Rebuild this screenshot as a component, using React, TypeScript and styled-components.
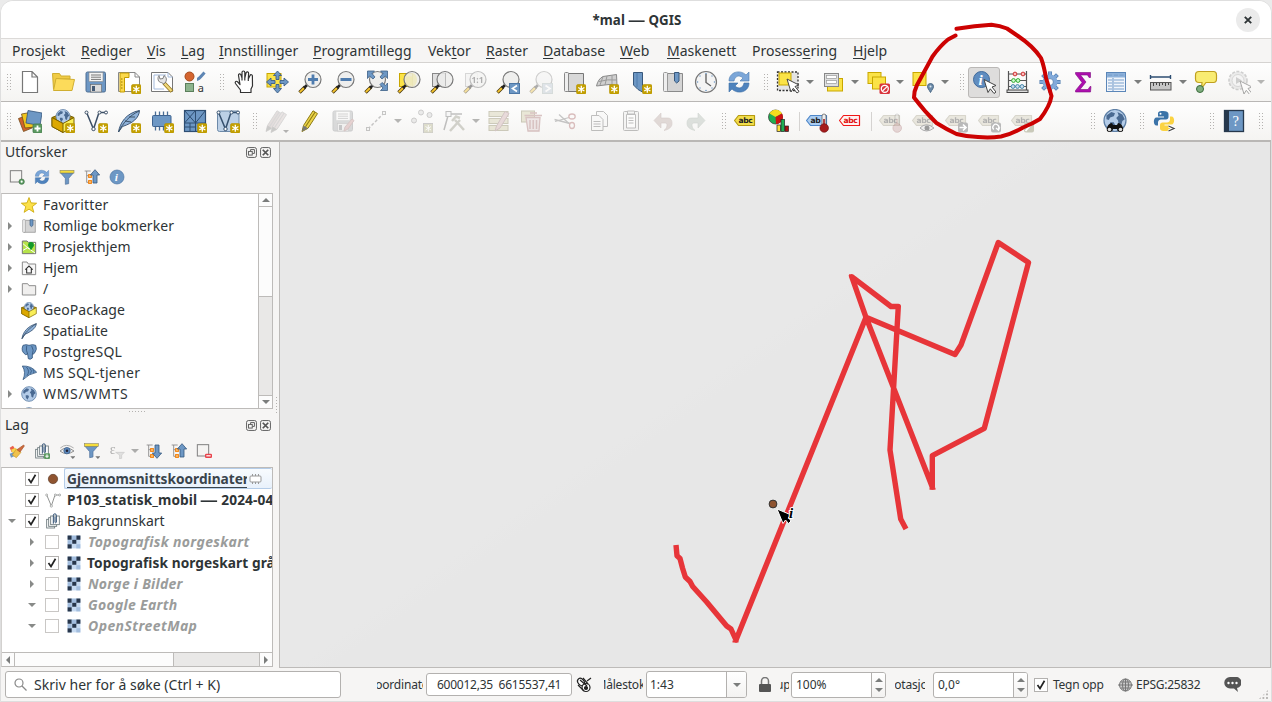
import React from 'react';
import styled, { createGlobalStyle, css } from 'styled-components';

const Global = createGlobalStyle`
  * { box-sizing: border-box; }
  body { margin: 0; background: #ebebeb; font-family: "Noto Sans", "Open Sans", sans-serif; font-size: 14px; color: #2e3436; overflow: hidden; }
  svg { display: block; flex: none; }
`;

/* ---------- layout parts ---------- */
const Window = styled.div`
  position: relative; width: 1272px; height: 702px; display: flex; flex-direction: column;
  background: #f6f5f4; border: 1px solid #dedede; border-radius: 13px 13px 0 0; overflow: hidden;
`;
const TitleBar = styled.header`
  height: 38px; flex: none; display: flex; align-items: center; background: #fff;
  border-bottom: 1px solid #dcdad8;
`;
const Title = styled.h1`
  flex: 1; margin: 0; padding-left: 37px; text-align: center; font-size: 13.3px; font-weight: 700; letter-spacing: 0.1px;
  line-height: 20px;
`;
const Dash = styled.span`display: inline-block; transform: scaleX(1.3); margin: 0 1.5px;`;
const CloseButton = styled.button`
  width: 24px; height: 24px; margin-right: 11px; border: 0; padding: 0; border-radius: 50%; background: #ebebeb;
  display: grid; place-items: center;
`;
const MenuBar = styled.nav`
  height: 24px; flex: none; display: flex; align-items: center; padding-left: 11px; border-bottom: 1px solid #d5d3d1;
`;
const MenuItem = styled.span<{ $w: number }>`
  width: ${p => p.$w}px; flex: none; white-space: nowrap; line-height: 23px;
  u { text-underline-offset: 2px; text-decoration-thickness: 1px; }
`;
const ToolRow = styled.div<{ $last?: boolean }>`
  height: ${p => (p.$last ? 40 : 39)}px; flex: none; display: flex; align-items: center; padding-left: 2px;
  background: linear-gradient(#fefefe, #f5f4f2); border-bottom: ${p => (p.$last ? 2 : 1)}px solid #b9b7b5;
`;
const Slot = styled.div`
  width: 33px; height: 31px; flex: none; padding: 3px 0 0 4px;
`;
const ActiveSlot = styled(Slot)`
  width: 32px; margin-right: 1px; padding: 2px 0 0 3px; border: 1px solid #bab8b6; border-radius: 3px; background: #dedddc;
`;
const Arrow = styled.i<{ $dim?: boolean }>`
  width: 12px; flex: none; display: flex; justify-content: center; padding-right: 2px;
  &::after { content: ""; border: 4px solid transparent; border-bottom: 0; border-top-color: ${p => (p.$dim ? '#b5b5b3' : '#7b7d7c')}; }
`;
const Grip = styled.i<{ $first?: boolean }>`
  width: ${p => (p.$first ? 11 : 16)}px; height: 18px; flex: none; padding-left: ${p => (p.$first ? 3 : 7)}px;
  background: radial-gradient(circle, #b4b2b0 0.8px, transparent 1px) content-box;
  background-size: 3px 3px; padding-right: ${p => (p.$first ? 2 : 3)}px;
`;
const Sep = styled.i<{ $w: number }>`
  width: ${p => p.$w}px; height: 19px; flex: none; display: flex; justify-content: center;
  &::after { content: ""; width: 1px; background: #d5d3d1; }
`;
const Gap = styled.i<{ $w: number }>`width: ${p => p.$w}px; flex: none;`;

const Main = styled.main`flex: 1; display: flex; min-height: 0;`;
const Side = styled.aside`width: 272px; flex: none; display: flex; flex-direction: column; background: #f6f5f4;`;
const PanelHead = styled.div<{ $h: number }>`
  height: ${p => p.$h}px; flex: none; display: flex; align-items: center; gap: 3px; padding: 0 2px 0 4px;
  span { flex: 1; line-height: 20px; }
`;
const PanelTools = styled.div`
  height: 31px; flex: none; display: flex; align-items: center; padding: 0 0 1px 8px; gap: 9px;
`;
const ToolArrow = styled.i`flex: none; margin: 0 -2px 0 -3px; opacity: 0.6;`;
const Frame = styled.div<{ $h: number }>`
  width: 272px; height: ${p => p.$h}px; flex: none; border: 1px solid #bdbbb9; border-left-color: #d3d1cf; background: #fff;
  display: flex; overflow: hidden;
`;
const VFrame = styled(Frame)`flex-direction: column;`;
const Tree = styled.div`flex: 1; min-width: 0; overflow: hidden;`;
const Row = styled.div<{ $indent?: number }>`
  height: 21px; display: flex; align-items: center; white-space: nowrap; padding-left: ${p => p.$indent ?? 0}px;
`;
const Expander = styled.i<{ $open?: boolean; $none?: boolean }>`
  width: 18px; flex: none; display: flex; justify-content: center; padding-right: 2px;
  ${p => !p.$none && css`&::after { content: ""; border: 4px solid transparent;
    ${p.$open ? 'border-bottom: 0; border-top-color: #888a88;' : 'border-right: 0; border-left-color: #888a88;'} }`}
`;
const RowLabel = styled.span<{ $kind?: 'bold' | 'muted'; $ls?: number }>`
  margin-left: 6px; line-height: 20px; letter-spacing: ${p => p.$ls ?? 0}px;
  ${p => p.$kind === 'bold' && css`font-weight: 700; font-size: 13.7px;`}
  ${p => p.$kind === 'muted' && css`font-weight: 700; font-style: italic; color: #9a9c9b; font-size: 14px; margin-left: 7px;`}
`;
const Current = styled.div`
  flex: 1; min-width: 0; height: 21px; margin-left: 3px; padding-left: 2px; display: flex; align-items: center;
  border: 1px solid #b4cce8; border-right: 0; border-radius: 2px; background: linear-gradient(#f8fbfe, #e8f1fb);
  b { width: 180px; margin-right: 1px; overflow: hidden; text-decoration: underline; text-underline-offset: 3px; font-size: 13.7px; line-height: 19px; color: #3a444c; }
`;
const Check = styled.i<{ $faint?: boolean }>`
  width: 14px; height: 14px; flex: none; border: 1px solid ${p => (p.$faint ? '#c9c7c5' : '#b3b1af')}; background: #fff; display: block;
  svg { margin: 1px 0 0 1px; }
`;
const VBar = styled.div`
  width: 14px; flex: none; border-left: 1px solid #bdbbb9; display: flex; flex-direction: column; background: #e9e8e7;
`;
const BarEnd = styled.div<{ $dir: 'up' | 'down' | 'left' | 'right' }>`
  width: 13px; height: 13px; flex: none; display: grid; place-items: center; background: #fcfcfc;
  border: 0 solid #bdbbb9;
  ${p => p.$dir === 'up' && 'border-bottom-width: 1px;'}
  ${p => p.$dir === 'down' && 'border-top-width: 1px;'}
  ${p => p.$dir === 'left' && 'border-right-width: 1px;'}
  ${p => p.$dir === 'right' && 'border-left-width: 1px;'}
`;
const Thumb = styled.div<{ $v?: boolean }>`
  background: #fcfcfc; border: 0 solid #bdbbb9;
  ${p => (p.$v ? 'height: 90px; border-bottom-width: 1px;' : 'width: 159px; border-right-width: 1px;')}
`;
const HBar = styled.div`height: 14px; flex: none; border-top: 1px solid #bdbbb9; display: flex; background: #e9e8e7;`;
const Fill = styled.div`flex: 1;`;
const SplitDots = styled.i`
  height: 5px; flex: none; display: flex; justify-content: center; align-items: center;
  &::after { content: ""; width: 18px; height: 3px; background: radial-gradient(circle, #b4b2b0 0.8px, transparent 1px); background-size: 3px 3px; }
`;
const SideSplit = styled.i`
  width: 6px; flex: none; display: flex; align-items: center; justify-content: center;
  &::after { content: ""; width: 3px; height: 18px; background: radial-gradient(circle, #b4b2b0 0.8px, transparent 1px); background-size: 3px 3px; }
`;
const Canvas = styled.section`
  flex: 1; background: linear-gradient(145deg, #e8e8e8 44%, #e7e7e7 46%); border: 1px solid #bdbbb9; border-top: 0;
`;
const Status = styled.footer`
  height: 33px; flex: none; display: flex; align-items: center; padding-left: 4px; font-size: 12px;
`;
const Field = styled.div<{ $w: number; $h: number; $ml?: number; $fs?: number }>`
  width: ${p => p.$w}px; height: ${p => p.$h}px; margin-left: ${p => p.$ml ?? 0}px; flex: none; display: flex; align-items: center;
  border: 1px solid #b3b1af; border-radius: 3px; background: #fff; font-size: ${p => p.$fs ?? 12}px; white-space: pre; overflow: hidden;
`;
const FieldText = styled.span<{ $pl: number; $ls?: number }>`flex: 1; padding-left: ${p => p.$pl}px; letter-spacing: ${p => p.$ls ?? 0}px;`;
const Clip = styled.span<{ $w: number; $ml: number; $shift: number }>`
  width: ${p => p.$w}px; margin-left: ${p => p.$ml}px; flex: none; overflow: hidden; white-space: nowrap; line-height: 20px;
  text-indent: -${p => p.$shift}px; font-size: 12px; letter-spacing: -0.2px;
`;
const FieldEnd = styled.div`
  align-self: stretch; display: flex; flex-direction: column; align-items: center; justify-content: center; gap: 6px;
  border-left: 1px solid #b3b1af; background: linear-gradient(#fff, #f3f2f1);
`;
const ComboEnd = styled(FieldEnd)`width: 20px;`;
const SpinEnd = styled(FieldEnd)`width: 14px;`;
const Item = styled.div<{ $ml: number; $w?: number }>`
  margin-left: ${p => p.$ml}px; width: ${p => (p.$w ? `${p.$w}px` : 'auto')}; flex: none; white-space: nowrap; letter-spacing: ${p => (p.$w ? -0.25 : 0)}px;
`;
const SizeGrip = styled.i`
  margin: auto 2px 1px auto; width: 11px; height: 11px;
  background: radial-gradient(circle, #b4b2b0 0.8px, transparent 1px); background-size: 3.6px 3.6px;
  clip-path: polygon(100% 0, 100% 100%, 0 100%);
`;
const Annotation = styled.svg`position: absolute; left: -1px; top: -1px; pointer-events: none;`;

const Tri = ({ d = 'down', s = 4 }: { d?: 'up' | 'down' | 'left' | 'right'; s?: number }) => {
  const pts = { down: '0,0 8,0 4,4', up: '0,4 8,4 4,0', left: '4,0 4,8 0,4', right: '0,0 0,8 4,4' }[d];
  const v = d === 'up' || d === 'down';
  return <svg width={v ? s * 2 : s} height={v ? s : s * 2} viewBox={v ? '0 0 8 4' : '0 0 4 8'}><polygon points={pts} fill="#7b7d7c" /></svg>;
};

/* ---------- icon fragments ---------- */
const BLUE = '#6d97c4';
const DARK = '#2e4e72';
const New = () => (
  <g><rect x="14.500" y="14.500" width="9.500" height="9.500" rx="1.500" fill="#c4a000" stroke="#b59400" strokeWidth=".6" />
    <path d="M19.300 15.700v7M16.200 17.500l6.200 3.500M22.400 17.500l-6.200 3.500" stroke="#fff" strokeWidth="1.300" /></g>
);
const Glass = ({ x = 15 }: { x?: number }) => (
  <g><path d="M1.500 22.500L7 17" stroke="#4b3a10" strokeWidth="3.400" /><path d="M1.800 22.200L6 18" stroke="#f7c62f" strokeWidth="1.900" />
    <path d="M6 18l3-3" stroke="#222" strokeWidth="2.600" />
    <circle cx={x} cy="9.500" r="8" fill="#ececeb" fillOpacity=".85" stroke="#7a7a7a" strokeWidth="1.200" /></g>
);
const Globe = ({ cx = 12, cy = 12, r = 9 }: { cx?: number; cy?: number; r?: number }) => (
  <g transform={`translate(${cx} ${cy}) scale(${r / 9})`}>
    <circle r="9" fill="#b4cce8" stroke="#5f80a6" strokeWidth="1" />
    <path d="M-7-4l4-3 3 1-1 2.500-3 1-1 2-2-.5zM-4 1.500l3 0 1 2-2 3.500-2-3zM2-7l4 2 2 4-2 1.500-1 4-2-1-.5-3.500-1.500-2 2-2z" fill="#4a6a92" />
  </g>
);
const Tag = ({ fill = '#f2dd4b', stroke = '#b59a10', color = '#222', text = 'abc' }) => (
  <g><path d="M0.500 11.500L4.500 6.500H20.500V16.500H4.500Z" fill={fill} stroke={stroke} strokeWidth="1.200" strokeLinejoin="round" />
    <text x="4.600" y="14.200" fontSize="7.600" fontWeight="700" fontFamily="DejaVu Sans, sans-serif" letterSpacing="-.4" fill={color}>{text}</text></g>
);
const GreyTag = ({ children }: { children?: React.ReactNode }) => (
  <g><g opacity=".55"><Tag fill="#dcd8c8" stroke="#bcb8a8" color="#777" /></g>{children}</g>
);
const Cursor = ({ x = 12, y = 9 }: { x?: number; y?: number }) => (
  <path transform={`translate(${x} ${y})`} d="M0 0L12 6 8 7.500 12 12.500 10 14 6.300 9.300 4 13Z" fill="#fff" stroke="#444" strokeWidth="1" strokeLinejoin="round" />
);
const Refresh = () => (
  <g><path d="M2 11C2 2 13-1 19 5l3-3v9h-9l3-3c-4-3.500-8-2-9 3z" fill="#7ba6d8" stroke="#4a7ab0" strokeWidth=".6" />
    <path d="M22 13c0 9-11 12-17 6l-3 3v-9h9l-3 3c4 3.500 8 2 9-3z" fill="#4f83bd" stroke="#3e6ea6" strokeWidth=".6" /></g>
);
const Funnel = () => (
  <g><path d="M2.500 6H21.500L14.500 14V22L9.500 23V14Z" fill={BLUE} stroke="#4e7099" strokeWidth="1" /><rect x="1.500" y="2" width="21" height="4" fill="#f5dd3b" stroke="#8a8560" strokeWidth=".9" /></g>
);
const TreeArrow = ({ up }: { up?: boolean }) => (
  <g><path d="M1 3h9M4 3v17h5M4 10h5" stroke="#8a8a8a" strokeWidth="1.300" fill="none" />
    <rect x="7" y="8.500" width="4" height="4" fill="#ffd9a0" stroke="#f07f0a" strokeWidth="1.700" /><rect x="7" y="17.500" width="4" height="4" fill="#ffd9a0" stroke="#f07f0a" strokeWidth="1.700" />
    {up ? <path d="M16.500 1L23.500 9H19.500V21H13.500V9H9.500Z" fill={BLUE} stroke="#35587f" strokeWidth="1.200" /> : <path d="M16.500 23L23.500 15H19.500V3H13.500V15H9.500Z" fill={BLUE} stroke="#35587f" strokeWidth="1.200" />}</g>
);
const Pencil = ({ c1 = '#ecd44a', c2 = '#8c7a12' }) => (
  <g><path d="M4 22.500L5.500 16.500 15 1.800 19.500 4.600 10 19.300Z" fill={c1} stroke={c2} strokeWidth="1" /><path d="M7.500 17.800L17 3.200" stroke={c2} strokeWidth="1.100" />
    <path d="M4 22.500L5.500 16.500 10 19.300Z" fill="#777" /></g>
);
const Floppy = () => (
  <g><rect x="2" y="2" width="19.500" height="20" rx="1.500" fill={BLUE} stroke="#4f6f93" /><rect x="5" y="2.500" width="14" height="9" fill="#f4f4f4" stroke="#888" strokeWidth=".6" />
    <path d="M7 5h10M7 7.200h10M7 9.400h10" stroke="#777" strokeWidth="1" /><rect x="6.500" y="14.500" width="11" height="7.500" fill="#dcdcdc" stroke="#666" strokeWidth=".6" /><rect x="8" y="16" width="3" height="5" fill="#445a75" /></g>
);
const V = ({ w = 1.5, c = '#3c4f66' }) => (
  <g fill="none" stroke={c} strokeWidth={w}><path d="M3 4.500L9.500 20 14.500 5M16 3.500h5" /><g fill="#fff" strokeWidth="1"><circle cx="2.500" cy="3.500" r="1.500" /><circle cx="9.500" cy="20" r="1.700" /><circle cx="15.500" cy="3.500" r="1.500" /><circle cx="22" cy="3.500" r="1.500" /></g></g>
);
const Feather = () => (
  <g><path d="M1.500 23C3 14 9 4 22.500 1.500 22 9 16 14 5.500 17.500Z" fill="#8fb2d9" stroke="#3e5878" strokeWidth="1" /><path d="M1.500 23C6 14 12 7 22 2M8 12l6 1M12 8l6 0" stroke="#34495f" strokeWidth=".9" fill="none" /></g>
);
const SmallFeather = () => (
  <g><path d="M1.500 23.500C3 13 10 5 23 1 22.500 6 19 11 6 17Z" fill="#8fb2d9" stroke="#3e5878" strokeWidth="1.300" /><path d="M1.500 23.500C6 15 12 8 23 1" stroke="#34495f" strokeWidth="1.200" fill="none" /></g>
);
const Box = () => (
  <g><path d="M1 8.500L12 4 23 8.500 12 14.500Z" fill="#b98e00" stroke="#7a6200" /><Globe cx={12} cy={7.5} r={7} /><path d="M1 8.500L12 14.500 23 8.500V17.500L12 23.500 1 17.500Z" fill="#f9ee58" stroke="#7a6200" strokeWidth="1" /><path d="M1 8.500L12 14.500V23.500L1 17.500Z" fill="#dca800" stroke="#7a6200" strokeWidth="1" /></g>
);
const Clip24 = () => (
  <g fill="#fdfdfd" stroke="#6b787c" strokeWidth="1.300"><rect x="2.500" y="9.500" width="12" height="13" /><rect x="5.500" y="7" width="12" height="13" /><rect x="8.500" y="4.500" width="13" height="13" /><path d="M12.500 16V3.500a2 2 0 014.500 0V14a1.200 1.200 0 01-2 0V6" fill="none" stroke={DARK} strokeWidth="1.500" /></g>
);
const Info = () => (
  <g><circle cx="12" cy="12" r="10.500" fill={BLUE} stroke="#4c76a5" /><text x="8.600" y="18" fontSize="17" fontStyle="italic" fontWeight="700" fontFamily="Liberation Serif, serif" fill="#fff">i</text></g>
);
const Thermo = ({ c = '#a51c1c' }) => (
  <g><rect x="16" y="5" width="4" height="13" rx="2" fill="#eee" stroke="#555" strokeWidth=".7" /><rect x="17.200" y="10" width="1.600" height="7" fill={c} /><circle cx="18.200" cy="19" r="4.300" fill={c} stroke="#6d1212" strokeWidth=".6" /></g>
);

const icons: Record<string, React.ReactNode> = {
  file: <path d="M4.500 1.500H14L19.500 7V22.500H4.500ZM14 1.500V7h5.500" fill="#fff" stroke="#777" strokeWidth="1.200" />,
  open: <g stroke="#d0ae30" strokeWidth="1"><path d="M1.500 3.500H8.500L10 6H19V9H6L2.500 19Z" fill="#f0cb45" /><path d="M5 8.500L23.500 9.500 21 20.500 2.500 20.500Z" fill="#fcdb5a" /></g>,
  save: <Floppy />,
  layout: <g><path d="M1.500 2.500H18L22.500 7V21.500H1.500Z" fill="#fff" stroke="#888" /><path d="M18 2.500V7h4.500" fill="none" stroke="#888" /><path d="M3 22V3H12V7.500H7.500V22Z" fill="#fbd94c" stroke="#c39b00" /><path d="M4 9h1.500M4 12h1.500M4 15h1.500M4 18h1.500" stroke="#9a7a00" /><New /></g>,
  manager: <g><path d="M1.500 2.500H18L22.500 7V21.500H1.500Z" fill="#fff" stroke="#777" /><path d="M18 2.500V7h4.500M4 5H16M4 5V19H14" fill="none" stroke="#a5bbdc" /><path d="M14 13l8 8.500" stroke="#94741a" strokeWidth="4" /><path d="M14.500 13.500l7 7.500" stroke="#f0d87a" strokeWidth="2.400" /><path d="M9 5.500l1 3.500 3-.5 1-3c3 2 3 5 1 7.500l-1.500.8-2-1.200C8 12.500 7 8 9 5.500z" fill="#e6e6e6" stroke="#666" strokeWidth=".8" /></g>,
  style: <g><circle cx="6.500" cy="6.500" r="4.500" fill="#d4652f" stroke="#a44a1c" /><path d="M14 9.500C16 9.500 18 6.500 21.500 2.500" stroke="#5e86b4" strokeWidth="3" fill="none" /><rect x="2.500" y="13.500" width="8" height="8" fill="#8db48d" stroke="#5b7f5b" /><text x="14.800" y="21.500" fontSize="11" fontFamily="Noto Sans" fill="#333">a</text></g>,
  hand: <path d="M8.500 22.500V20L3.500 13.500c-1-2 .8-3 2.300-1.500L8 14.500 6.500 5.500c-.3-2 2-2.300 2.500-.5L10 8V2.500c0-2 2.800-2 2.800 0V8L14 3c.5-1.800 2.800-1.200 2.600.5L16.300 9 18 5.500c.6-1.500 2.600-.8 2.400.8L20.500 16l-1.500 3v3.500Z M10 8v2.500M12.800 8v2.500M16.300 9v2" fill="#fff" stroke="#333" strokeWidth="1.200" strokeLinejoin="round" />,
  panSel: <g><rect x="2" y="3.500" width="14" height="13.500" fill="#fbe347" stroke="#c9a700" /><g fill={BLUE} stroke="#3c5f87" strokeWidth=".9"><path d="M12.500 1l4 4.500h-2.500v4h-3v-4H8.500zM12.500 23l4-4.500h-2.500v-4h-3v4H8.500zM1.500 12l4.500-4v2.500h4v3H6V16zM23.500 12l-4.500-4v2.500h-4v3h4V16z" /></g></g>,
  zoomIn: <g><Glass /><path d="M15 4.500v10M10 9.500h10" stroke="#4f7cae" strokeWidth="2.800" /></g>,
  zoomOut: <g><Glass /><path d="M9.500 9.500h11" stroke="#4f7cae" strokeWidth="2.800" /></g>,
  zoomFull: <g><Glass x={13.5} /><g fill={BLUE} stroke="#3c5f87" strokeWidth=".8"><path d="M3.500 1h7L8 3.500 11 7 9 9 5.500 6 3.500 8.500zM23.500 1h-7L19 3.500 16 7l2 2 3.500-3 2 2.500zM23.500 20.500h-7L19 18l-3-3.500 2-2 3.500 3 2-2.500z" /></g></g>,
  zoomSel: <g><rect x="2.500" y="3.500" width="13" height="13" fill="#fbe347" stroke="#c9a700" /><Glass /><path d="M15.500 3v13.500c6-1 6-12.500 0-13.500zM9 6.500h6.500v9H10C8.500 13 8 9 9 6.500z" fill="#efe7a8" opacity=".6" /></g>,
  zoomLayer: <g><rect x="2.500" y="3.500" width="13" height="13" fill="#e0e0e0" stroke="#888" /><Glass /><path d="M15.500 3v13" stroke="#bbb" /></g>,
  zoomNative: <g opacity=".45"><rect x="2.500" y="3.500" width="12" height="13" fill="#eee" stroke="#aaa" /><Glass /><text x="8.500" y="12.800" fontSize="8.500" fontWeight="700" fill="#555">1:1</text></g>,
  zoomLast: <g><Glass /><rect x="13.500" y="13.500" width="10" height="10" fill="#6d97c4" stroke="#4c76a5" /><path d="M21 15.500l-4.500 3 4.500 3" stroke="#fff" strokeWidth="1.700" fill="none" /></g>,
  zoomNext: <g opacity=".35"><Glass /><rect x="13.500" y="13.500" width="10" height="10" fill="#aebccb" stroke="#9aa" /><path d="M16.500 15.500l4.500 3-4.500 3" stroke="#fff" strokeWidth="1.700" fill="none" /></g>,
  mapView: <g><path d="M4.500 3.500H21.500V21.500H4.500Z" fill="#d8d8d8" stroke="#777" /><rect x="2.500" y="2.500" width="4" height="19" rx="1" fill="#eee" stroke="#888" /><New /></g>,
  view3d: <g><path d="M8 6.500L21.500 4.500 22 15.500 14 14.500 1.500 16Q3 9 8 6.500Z" fill="#cfcfcf" stroke="#8a8a8a" /><path d="M4 11.500Q12 9 22 10M12 6l-2 9M17 5.500l0 9M8 6.500L5 15" stroke="#9a9a9a" fill="none" /><New /></g>,
  bookNew: <g><path d="M5.500 2.500H14.500V22L10 19.500 5.500 15Z" fill={BLUE} stroke="#38587c" /><path d="M9 3v14" stroke="#4f7cae" /><New /></g>,
  bookmarks: <g><path d="M4.500 3.500H21.500V21.500H4.500Z" fill="#d4d4d4" stroke="#8a8a8a" /><rect x="2.500" y="2.500" width="4" height="19" rx="1" fill="#eee" stroke="#999" /><path d="M13.500 2.500H18V11L15.700 13 13.500 11Z" fill={BLUE} stroke="#38587c" /></g>,
  clock: <g><circle cx="12" cy="12" r="10.500" fill="#f4f4f4" stroke="#777" strokeWidth="1.200" /><path d="M12 4v8.500l5 3.500" stroke="#666" strokeWidth="1.400" fill="none" /><g fill="#6d97c4"><circle cx="12" cy="3.500" r=".8" /><circle cx="12" cy="20.500" r=".8" /><circle cx="3.500" cy="12" r=".8" /><circle cx="20.500" cy="12" r=".8" /><circle cx="6" cy="6" r=".7" /><circle cx="18" cy="6" r=".7" /><circle cx="6" cy="18" r=".7" /><circle cx="18" cy="18" r=".7" /></g></g>,
  refresh: <Refresh />,
  select: <g><rect x="1.500" y="2" width="20.500" height="18.500" fill="#e4e4e4" stroke="#333" strokeDasharray="2 1.500" strokeWidth="1.300" /><rect x="3" y="3" width="12" height="12" fill="#fbe347" stroke="#c9a700" /><Cursor x={11} y={9} /></g>,
  selForm: <g><rect x="6.500" y="8.500" width="15" height="12.500" fill="#fbe347" stroke="#c9a700" /><rect x="3.500" y="3.500" width="14" height="13" fill="#dfe0e0" stroke="#888" /><rect x="5.500" y="5.500" width="10" height="3" fill="#fff" stroke="#999" strokeWidth=".7" /><rect x="5.500" y="10.500" width="10" height="3" fill="#fff" stroke="#999" strokeWidth=".7" /></g>,
  deselect: <g><rect x="2" y="2.500" width="13" height="11" fill="#fbe347" stroke="#c9a700" /><rect x="6.500" y="7" width="13" height="12" fill="#fbe347" stroke="#c9a700" /><rect x="13.500" y="13.500" width="10.500" height="10.500" rx="1.500" fill="#d9343c" /><circle cx="18.800" cy="18.800" r="3.500" fill="none" stroke="#fff" strokeWidth="1.300" /><path d="M16.500 21l4.600-4.400" stroke="#fff" strokeWidth="1.200" /></g>,
  selLoc: <g><rect x="2" y="2.500" width="13" height="13" fill="#fbe347" stroke="#c9a700" /><path d="M19.500 22.500c-1.500-3-3-4-3-6a3 3 0 016 0c0 2-1.500 3-3 6z" fill="#6c8caa" stroke="#4a6784" /><circle cx="19.500" cy="16.500" r="1" fill="#dfe8f2" /></g>,
  identify: <g><circle cx="9.500" cy="9.500" r="8" fill="#5f8dc0" stroke="#3f6a9c" /><text x="6.500" y="15" fontSize="15" fontStyle="italic" fontWeight="700" fontFamily="Liberation Serif, serif" fill="#fff">i</text><Cursor x={12} y={9.5} /></g>,
  abacus: <g><path d="M3.500 1v20M21.500 1v20M3.500 4h18M3.500 10.500h18M3.500 16.500h18" stroke="#555" strokeWidth="1.200" fill="none" /><rect x="2" y="20" width="21" height="2.500" fill="#ddd" stroke="#444" /><g fill="#fbb" stroke="#c33"><circle cx="10" cy="4" r="1.900" /><circle cx="18" cy="4" r="1.900" /></g><g fill="#cfc" stroke="#3a3"><circle cx="8.500" cy="10.500" r="1.900" /><circle cx="13" cy="10.500" r="1.900" /></g><g fill="#cde" stroke="#48a"><circle cx="8" cy="16.500" r="1.900" /><circle cx="12.500" cy="16.500" r="1.900" /><circle cx="17" cy="16.500" r="1.900" /></g></g>,
  gear: <g fill="none"><path d="M12 1.500v21M1.500 12h21M4.600 4.600l14.800 14.800M19.400 4.600L4.600 19.400" stroke="#4f7cae" strokeWidth="4" /><path d="M12 2v20M2 12h20M5 5l14 14M19 5L5 19" stroke="#7fa8da" strokeWidth="2.600" /><circle cx="12" cy="12" r="5.500" strokeWidth="4" stroke="#82aada" /><circle cx="12" cy="12" r="3.400" strokeWidth=".8" fill="#fff" stroke="#4f7cae" /></g>,
  sigma: <path d="M4.500 2.500H19.500V7.500H18L16.500 5H9.500L15 12 9 19.500H17L19 16.500H20L19.500 22H4.500V20.500L11 12.500 4.500 4Z" fill="#ad0fae" stroke="#7d0a80" strokeWidth=".6" />,
  table: <g><rect x="2.500" y="2.500" width="19" height="19" fill="#f1f5fb" stroke="#5b86b8" /><rect x="3" y="3" width="18" height="4.500" fill="#8db1da" /><path d="M4 5.200h4M10 5.200h4M15.500 5.200h4M4 10h4M4 13h4M4 16h4M4 19h4M10 10h10M10 13h10M10 16h10M10 19h10M9 8v13" stroke="#7ba1cd" strokeWidth="1.200" /></g>,
  measure: <g><path d="M1.500 7h20M1.500 5v4M21.500 5v4" stroke={DARK} strokeWidth="1.400" /><rect x="1.500" y="12.500" width="20.500" height="7.500" fill="#c6c6c6" stroke="#555" /><path d="M4.500 13v3M7.500 13v2M10.500 13v3M13.500 13v2M16.500 13v3M19.500 13v2" stroke="#444" /></g>,
  tip: <g><path d="M5 1.500H19.500Q22.500 1.500 22.500 5V9Q22.500 12.500 19.500 12.500H12L7.500 18.500 8 12.500H5Q1.500 12.500 1.500 9V5Q1.500 1.500 5 1.500Z" fill="#f9ec72" stroke="#c0a020" strokeWidth="1.200" /><circle cx="6" cy="19" r="3.500" fill="#7fae7f" stroke="#3d6b3d" /></g>,
  action: <g opacity=".45"><circle cx="11" cy="10.500" r="9" fill="#d8d8d8" stroke="#9a9a9a" strokeWidth="1.600" strokeDasharray="3 1.500" /><circle cx="11" cy="10.500" r="6" fill="#eee" stroke="#aaa" /><path d="M9 7l6 3.500-6 3.500z" fill="#999" /><Cursor x={13} y={11} /></g>,
  dsm: <g stroke="#6f4c1c" strokeWidth=".8"><path d="M.5 9.500L10 6 14 19 5.500 22.500Z" fill="#d3622b" /><path d="M3.500 5L15 3 17 18 7 19Z" fill="#f0c61c" /><path d="M10 1.500L24 4 22 16.500 8 14Z" fill="#6d97c4" stroke="#33557c" /><rect x="15" y="15" width="9" height="9" rx="1.500" fill="#5c9a62" stroke="#417a48" /><path d="M19.500 16.500v6M16.500 19.500h6" stroke="#fff" strokeWidth="1.800" /></g>,
  newGpkg: <g><Box /><New /></g>,
  newShp: <g><V /><New /></g>,
  newSpl: <g><Feather /><New /></g>,
  newMem: <g><path d="M5.500 2.500v4M9.500 2.500v4M13.500 2.500v4M17.500 2.500v4M5.500 17v4.500M9.500 17v4.500M13.500 17v4.500" stroke="#4a6d95" strokeWidth="1.300" /><rect x="2.500" y="6.500" width="18.500" height="11" rx="1" fill={BLUE} stroke="#3e6390" /><New /></g>,
  newMesh: <g><rect x="1.500" y="1.500" width="21" height="21" fill="#6d97c4" stroke={DARK} strokeWidth="1.200" /><path d="M1.500 14H22.500M12.500 1.500V22.500M7 14V22M12.500 14L1.500 1.500M1.500 14L12.500 1.500M12.500 14L22.500 1.500M1.500 18H12.500" stroke={DARK} fill="none" /><New /></g>,
  newVirt: <g><rect x="1.500" y="2" width="21.500" height="20.500" rx="2" fill="#bcd0e6" stroke="#6d8aa9" /><V c="#35506e" /><New /></g>,
  edits: <g opacity=".35"><g transform="translate(-3 0)"><Pencil c1="#b9a9a9" c2="#999" /></g><g transform="translate(2 1)"><Pencil c1="#c9b9b9" c2="#999" /></g><path d="M18 21h6l-3 3z" fill="#333" /></g>,
  pencil: <Pencil />,
  saveEd: <g opacity=".3"><g style={{ filter: 'grayscale(0.9)' }}><Floppy /></g><path d="M13 22l1-4 7-8 2 1.500-6 8.500z" fill="#b77" stroke="#855" /></g>,
  addLine: <g opacity=".35" stroke="#666" fill="#eee"><path d="M4 20L20 4" strokeDasharray="3 2" strokeWidth="1.500" /><rect x="2.500" y="18.500" width="3" height="3" /><rect x="18.500" y="2.500" width="3" height="3" /></g>,
  addPts: <g opacity=".35" stroke="#777" fill="#ccc"><circle cx="12" cy="3.500" r="2.500" /><circle cx="5" cy="11.500" r="2.500" /><circle cx="20.500" cy="6" r="2.500" /><rect x="14.500" y="14.500" width="9.500" height="9.500" fill="#a8a878" /><path d="M19.300 16v6.500M16.500 17.500l5.500 3.500M22 17.500L16.500 21" stroke="#fff" /></g>,
  nodeTool: <g opacity=".35" fill="none" stroke="#555"><path d="M2 21L6.500 5H20" strokeWidth="1.500" /><rect x="4" y="2.500" width="5" height="5" fill="#eee" /><path d="M8 22L18 11M13 11l9 10M10 12l4-4.500 4 1.500" strokeWidth="2.500" stroke="#887" /></g>,
  attrs: <g opacity=".4"><g fill="#cfcba5" stroke="#89855f"><rect x="2" y="2.500" width="19" height="5" /><rect x="2" y="9.500" width="19" height="5" /><rect x="2" y="16.500" width="19" height="5" /></g><path d="M8 22l1.500-5L18 2.500l4 2L13 19z" fill="#caa" stroke="#977" /></g>,
  trash: <g opacity=".42"><rect x="1.500" y="2" width="13" height="11" fill="#cfcba5" stroke="#89855f" /><path d="M6 8.500h14L19 22H8z" fill="#dcc" stroke="#a77" strokeWidth="1.300" /><path d="M4.500 6.500H22M10 11v9M13.200 11v9M16.500 11v9M10 4h7" stroke="#a77" strokeWidth="1.500" /></g>,
  cut: <g opacity=".4" fill="none" stroke="#777" strokeWidth="1.300"><path d="M1.500 10.500L17 14.500M2 12.500L16 8.500" /><path d="M6 5.500l10 9" /><ellipse cx="19" cy="7.500" rx="3.200" ry="2.500" stroke="#a66" /><ellipse cx="19" cy="16.500" rx="2.500" ry="3" stroke="#a66" /></g>,
  copy: <g opacity=".45" fill="#f5f5f5" stroke="#777"><path d="M10.500 2.500h7l4 4v11h-11z" /><path d="M5.500 6.500h7.500l4 4v11H5.500z" /><path d="M7.500 12.500h7M7.500 15h7M7.500 17.500h7" /></g>,
  paste: <g opacity=".45" fill="#eee" stroke="#777"><rect x="4.500" y="2.500" width="15" height="19" rx="1" /><path d="M7.500 5.500h9V19h-9z" fill="#fff" /><path d="M9.500 9h5M9.500 11.500h5M9.500 14h5M8.500 2h7v3h-7z" /></g>,
  undo: <path opacity=".5" d="M9 4v5h6c4 0 5 2 5 5.500S17 20.500 12 21.500c3-2 4.500-7.500 1-7.500H9v5L2 11.500z" fill="#c9bab6" stroke="#b0a09c" strokeWidth=".6" />,
  redo: <path opacity=".5" d="M13 4v5H7c-4 0-5 2-5 5.500s3 6 8 7c-3-2-4.500-7.500-1-7.500h4v5l7-7.500z" fill="#c0c8c2" stroke="#a6b0a8" strokeWidth=".6" />,
  label: <Tag />,
  diagram: <g><circle cx="8.500" cy="8" r="7" fill="#1fae52" stroke="#333" strokeWidth=".7" /><path d="M8.500 8L2.500 4.500A7 7 0 0115 4.500z" fill="#f5dc1e" /><path d="M8.500 8L15 4.500A7 7 0 019 15z" fill="#c11" /><g stroke="#222" strokeWidth=".7"><rect x="10" y="16" width="3.500" height="6.500" fill="#fde13a" /><rect x="14" y="10.500" width="3.500" height="12" fill="#1fae52" /><rect x="18" y="17" width="3.500" height="5.500" fill="#a11" /></g></g>,
  labelPin: <g><Tag fill="#a9ccf2" stroke="#4d86c8" text="ab" /><Thermo /></g>,
  labelRed: <Tag fill="#fff1f1" stroke="#f01818" color="#e01010" />,
  lab1: <GreyTag><g opacity=".3"><Thermo c="#b88" /></g></GreyTag>,
  lab2: <GreyTag><path d="M8 19q6-6.500 14 0-8 6-14 0z" fill="#eee" stroke="#aaa" /><circle cx="15" cy="19" r="2.500" fill="#999" /></GreyTag>,
  lab3: <GreyTag><rect x="13" y="13.500" width="10" height="10" rx="2" fill="#b9b9b9" /><path d="M14.500 18.500h6M18 15.500l3 3-3 3" stroke="#fff" strokeWidth="1.700" fill="none" /></GreyTag>,
  lab4: <GreyTag><rect x="13" y="13.500" width="10" height="10" rx="2" fill="#b9b9b9" /><path d="M15.800 20.500a3 3 0 114.500-.5M18 19l2.500 2.200 1.200-3" stroke="#fff" strokeWidth="1.300" fill="none" /></GreyTag>,
  lab5: <GreyTag><rect x="13" y="13.500" width="10" height="10" rx="2" fill="#c9c9b9" /><path d="M14.500 22l6-7" stroke="#fff" strokeWidth="1.800" /></GreyTag>,
  meta: <g><Globe cx={12} cy={11.5} r={11} /><path d="M4 22c-1-4 2-8 5-8l1 2h4l1-2c3 0 6 4 5 8-2 2-6 1-6-2h-4c0 3-4 4-6 2z" fill="#111" /><circle cx="6.500" cy="20.500" r="1.800" fill="#ddd" /><circle cx="17.500" cy="20.500" r="1.800" fill="#ddd" /></g>,
  python: <g><path d="M11 2c-5 0-5 1.500-5 3v2.500h6V8.500H4.500C1 8.500 1 16.500 4.500 16.500H6V13.500c0-2 1.500-3 3-3h5c1.500 0 2.500-1 2.500-2.500V5c0-2-2-3-5.500-3z" fill="#3b73a8" /><path d="M13 22c5 0 5-1.500 5-3v-2.500h-5.500V15.500H19.500c3.500 0 3.500-8 0-8H18v3c0 2-1.500 3-3 3h-4.500c-1.500 0-2.500 1-2.500 2.500v3.500c0 2 2 2.500 5 2.500z" fill="#fbd342" /><circle cx="8.500" cy="4.700" r="1" fill="#fff" /><path d="M16.500 17l5.500 2.500-5.500 2.500" stroke="#fff" strokeWidth="3" fill="none" /><path d="M16.500 17l5.500 2.500-5.500 2.500" stroke="#444" strokeWidth="1.300" fill="none" /></g>,
  help: <g><rect x="2.500" y="1.500" width="19" height="21" fill="#6d97c4" stroke="#26384d" strokeWidth="1.300" /><rect x="2.500" y="1.500" width="4.500" height="21" fill="#26384d" /><text x="10.500" y="17" fontSize="14.500" fontFamily="Liberation Serif, serif" fill="#fff">?</text></g>,
  /* panel icons */
  addSel: <g><rect x="2" y="2.500" width="17" height="17" fill="#f5f4f2" stroke="#808080" strokeWidth="1.500" /><circle cx="19" cy="19" r="4" fill="#5c9a62" stroke="#3c7242" /><circle cx="19" cy="19" r="1.600" fill="#fff" /></g>,
  funnel: <Funnel />,
  treeUp: <TreeArrow up />,
  treeDown: <TreeArrow />,
  info: <Info />,
  brush: <g><path d="M1 7l5-3 4 6-6 4z" fill="#e9604a" /><path d="M3 10l7-3 4 8-6 5z" fill="#f7d54a" /><path d="M1 16l6-2 2 5-6 3z" fill="#6d97c4" /><path d="M11 9l7 5-7 8-6-4z" fill="#f0c24c" stroke="#c99a2a" /><path d="M12 10l10-7 1 1.500-6.500 9z" fill="#ce6a3c" stroke="#a6532a" /></g>,
  addGroup: <g><Clip24 /><rect x="15" y="15.500" width="9" height="8.500" rx="1.500" fill="#5c9a62" /><path d="M19.500 17v5.500M17 19.800h5" stroke="#fff" strokeWidth="1.500" /></g>,
  eye: <g><path d="M1.500 12Q11 3 22.500 12 11 20 1.500 12Z" fill="#eee" stroke="#8f8f8f" strokeWidth="1.500" /><circle cx="12" cy="11.500" r="4.800" fill="#5d88bb" stroke="#3b5d88" /><circle cx="12" cy="11.500" r="1.900" fill="#223" /><path d="M2 7.500Q11-.5 22 7.500" stroke="#aaa" strokeWidth="1.400" fill="none" /><path d="M17 20h7.500l-3.800 4z" fill="#777" /></g>,
  funnelDrop: <g><g transform="translate(-1 -1)"><Funnel /></g><path d="M17 20H24.500L20.800 24Z" fill="#777" /></g>,
  epsilon: <g opacity=".5"><text x="1" y="16" fontSize="21" fontFamily="Liberation Serif, serif" fill="#666">ε</text><path d="M10 14h13l-4 4v5l-3 1v-6z" fill="#ccc" stroke="#999" /></g>,
  remove: <g><rect x="2" y="2.500" width="17" height="17" fill="#f5f4f2" stroke="#808080" strokeWidth="1.500" /><rect x="13.500" y="16" width="10.500" height="6.500" rx="2" fill="#e8434b" /><path d="M15.500 19.200h6.500" stroke="#fff" strokeWidth="1.800" /></g>,
  star: <path d="M12 .8l3 8 8.500.5-6.700 5.200 2.500 8.500-7.300-4.800-7.300 4.800 2.500-8.500L.5 9.300l8.500-.5z" fill="#fbe04a" stroke="#c9a400" strokeWidth="1.200" />,
  project: <g><path d="M2 3h7l2 2h11v17H2z" fill="#b6e34a" stroke="#777" strokeWidth="1.500" /><path d="M3 7l9 8 9-9M3 17l7-4 11 8" stroke="#fff" strokeWidth="1.500" fill="none" /><path d="M15 17l-4-6a4.500 4.500 0 118 0z" fill="#159a2a" /></g>,
  home: <g><path d="M2 3h7l2 3h11v16H2z" fill="#f6f6f6" stroke="#8a8a8a" strokeWidth="1.500" /><path d="M6.500 14.500L12 9l5.500 5.500M8.500 13.500v6h7v-6" stroke="#333" strokeWidth="1.600" fill="#fff" /></g>,
  folder: <path d="M2 4h8l2 3h10v14H2z" fill="#f0efee" stroke="#8f8f8f" strokeWidth="1.500" />,
  gpkg: <Box />,
  feather: <SmallFeather />,
  pg: <g fill="#6d97c4" stroke="#35587f" strokeWidth="1.300"><path d="M3 2Q8 0 12 2 18 0 22 2 25 8 20 14L17 16V21Q14 24 11 22L10 15 7 16Q-1 11 3 2Z" /><path d="M8.500 2.500Q7 10 10 15M16 3Q20 9 17 16" fill="none" /></g>,
  mssql: <g fill="#6d97c4" stroke="#35587f" strokeWidth="1.200"><path d="M2 1.500Q16 1 23.500 11 12 13 3 22 8 11 2 1.500Z" /><path d="M8 3Q14 9 9 16M13 4.500Q18 9 14 13M18 7q2 3 1 5" fill="none" /></g>,
  globe: <Globe r={11} />,
  dot: <circle cx="12" cy="12" r="7" fill="#8f5430" stroke="#5a3a26" strokeWidth="1" />,
  vline: <g transform="translate(0 1)"><V w={1.4} c="#8a8c8b" /></g>,
  group: <Clip24 />,
  raster: <g><rect x="1" y="1" width="22" height="22" fill="#c7dbf2" /><g fill="#27364b"><path d="M1 1h7v7H1zM16 1h7v7h-7zM9 8h7v7H9zM1 16h7v7H1z" /></g><g fill="#7d9fca"><path d="M8 1h8v7H8zM1 9h7v7H1zM16 16h7v7h-7z" opacity=".5" /></g></g>,
};

const Icon = ({ n, s = 24 }: { n: string; s?: number }) => <svg width={s} height={s} viewBox="0 0 24 24">{icons[n]}</svg>;

const Tick = () => <svg width="10" height="10" viewBox="0 0 10 10"><path d="M1.500 5L4 8.500 8.500 .8" stroke="#222" strokeWidth="1.700" fill="none" /></svg>;
const DockButtons = () => (
  <>
    <svg width="11" height="11" viewBox="0 0 12 12" fill="none" stroke="#555"><rect x=".6" y=".6" width="10.800" height="10.800" rx="2" /><rect x="2.800" y="4.800" width="4" height="4" /><path d="M5 4.500V2.800h4.200V7H7" /></svg>
    <svg width="11" height="11" viewBox="0 0 12 12" fill="none" stroke="#555"><rect x=".6" y=".6" width="10.800" height="10.800" rx="2" /><path d="M3 3l6 6M9 3L3 9" strokeWidth="1.900" /></svg>
  </>
);

/* ---------- data ---------- */
const menus: [string, string, string, number][] = [
  ['Pros', 'j', 'ekt', 69], ['', 'R', 'ediger', 66], ['', 'V', 'is', 34], ['', 'L', 'ag', 38], ['', 'I', 'nnstillinger', 94],
  ['', 'P', 'rogramtillegg', 115], ['Vek', 't', 'or', 58], ['', 'R', 'aster', 57], ['', 'D', 'atabase', 77], ['', 'W', 'eb', 47],
  ['', 'M', 'askenett', 85], ['Prosess', 'e', 'ring', 101], ['', 'H', 'jelp', 40],
];
const row1 = '|0 file open save layout manager style | hand panSel zoomIn zoomOut zoomFull zoomSel zoomLayer zoomNative zoomLast zoomNext mapView view3d bookNew bookmarks clock refresh | select v selForm v deselect v selLoc v | !identify abacus gear sigma table v measure v tip action d'.split(' ');
const row2 = '|0 dsm newGpkg newShp newSpl newMem newMesh newVirt | edits pencil saveEd addLine d addPts nodeTool d attrs trash cut copy paste undo redo | label diagram /6 labelPin labelRed /7 lab1 lab2 lab3 lab4 lab5 _43 | meta | python _21 | help |'.split(' ');
const renderTool = (t: string, i: number) => {
  if (t === '|0') return <Grip key={i} $first />;
  if (t === '|') return <Grip key={i} />;
  if (t === 'v' || t === 'd') return <Arrow key={i} $dim={t === 'd'} />;
  if (t[0] === '/') return <Sep key={i} $w={+t.slice(1)} />;
  if (t[0] === '_') return <Gap key={i} $w={+t.slice(1)} />;
  if (t[0] === '!') return <ActiveSlot key={i}><Icon n={t.slice(1)} /></ActiveSlot>;
  return <Slot key={i}><Icon n={t} /></Slot>;
};
/* icon, label, expandable, letter spacing */
const sources: [string, string, boolean, number][] = [
  ['star', 'Favoritter', false, 0.15], ['bookmarks', 'Romlige bokmerker', true, 0.05], ['project', 'Prosjekthjem', true, 0.1], ['home', 'Hjem', true, 0],
  ['folder', '/', true, 0], ['gpkg', 'GeoPackage', false, 0.05], ['feather', 'SpatiaLite', false, 0.05], ['pg', 'PostgreSQL', false, 0.25],
  ['mssql', 'MS SQL-tjener', false, 0.3], ['globe', 'WMS/WMTS', true, 0.7], ['globe', 'Vektorfliser', false, 0],
];
/* name, visible, expanded, letter spacing */
const rasters: [string, boolean, boolean, number][] = [
  ['Topografisk norgeskart', false, false, 0.33], ['Topografisk norgeskart gråtone', true, false, 0.08], ['Norge i Bilder', false, false, 0.25],
  ['Google Earth', false, true, 0.3], ['OpenStreetMap', false, true, 0.42],
];

const Track = () => (
  <svg width="990" height="525" viewBox="280 142 990 525">
    <g fill="none" stroke="#e73539" strokeWidth="5.400" strokeLinejoin="round">
      <path d="M676 545L677 555.700 680 558.500 682.500 568 685.300 577 690 581.500 692.700 586.500 706.700 602 726.700 626 731 629 736 640 866 317.300 955 354.500 961 345 998.300 242.500 1028.500 262.500 984.300 428.300 932.300 455.700V487L866 317.300 851.700 276.700 891 306.500 898.300 306.500 890 450 900.700 519 906 529" />
      <path d="M732.500 641.500h6M929.500 488.800h6M849 275l4 2" strokeWidth="2" />
    </g>
    <circle cx="773" cy="504" r="3.900" fill="#8f5430" stroke="#333" strokeWidth="1" />
    <path d="M777 509L792.500 515.500 788.500 517.500 791 521 788.500 523.500 785.500 520 783 523.500Z" fill="#000" stroke="#fff" strokeWidth="1" />
    <text x="789" y="518" fontFamily="Liberation Serif, serif" fontStyle="italic" fontWeight="700" fontSize="15" stroke="#fff" strokeWidth="2" paintOrder="stroke" fill="#000">i</text>
  </svg>
);

export default function App() {
  return (
    <>
      <Global />
      <Window>
        <TitleBar>
          <Title>*mal <Dash>—</Dash> QGIS</Title>
          <CloseButton><svg width="8" height="8" viewBox="0 0 8 8"><path d="M.8.8l6.400 6.400M7.200.8L.8 7.200" stroke="#2e3436" strokeWidth="1.900" /></svg></CloseButton>
        </TitleBar>
        <MenuBar>
          {menus.map(([a, u, b, w]) => <MenuItem key={a + u + b} $w={w}>{a}<u>{u}</u>{b}</MenuItem>)}
        </MenuBar>
        <ToolRow>{row1.map(renderTool)}</ToolRow>
        <ToolRow $last>{row2.map(renderTool)}</ToolRow>
        <Main>
          <Side>
            <PanelHead $h={20}><span>Utforsker</span><DockButtons /></PanelHead>
            <PanelTools>
              {['addSel', 'refresh', 'funnel', 'treeUp', 'info'].map(n => <Icon key={n} n={n} s={16} />)}
            </PanelTools>
            <Frame $h={216}>
              <Tree>
                {sources.map(([ic, t, exp, ls]) => (
                  <Row key={t}><Expander $none={!exp} /><Gap $w={1} /><Icon n={ic} s={16} /><RowLabel $ls={ls}>{t}</RowLabel></Row>
                ))}
              </Tree>
              <VBar><BarEnd $dir="up"><Tri d="up" /></BarEnd><Thumb $v /><Fill /><BarEnd $dir="down"><Tri /></BarEnd></VBar>
            </Frame>
            <SplitDots />
            <PanelHead $h={22}><span>Lag</span><DockButtons /></PanelHead>
            <PanelTools>
              {['brush', 'addGroup', 'eye', 'funnelDrop', 'epsilon'].map(n => <Icon key={n} n={n} s={16} />)}
              <ToolArrow><Tri /></ToolArrow>
              {['treeDown', 'treeUp', 'remove'].map(n => <Icon key={n} n={n} s={16} />)}
            </PanelTools>
            <VFrame $h={200}>
              <Tree>
                <Row $indent={23}><Check><Tick /></Check><Gap $w={6} /><Icon n="dot" s={16} />
                  <Current><b>Gjennomsnittskoordinater</b>
                    <svg width="15" height="12" viewBox="0 0 15 12" fill="#fff" stroke="#999"><path d="M4.500 1v10M7.500 1v10M10.500 1v10" /><rect x="2" y="3" width="11" height="6" rx="1" /></svg>
                  </Current></Row>
                <Row $indent={23}><Check><Tick /></Check><Gap $w={6} /><Icon n="vline" s={16} /><RowLabel $kind="bold" $ls={0.1}>P103_statisk_mobil <Dash>—</Dash> 2024-04</RowLabel></Row>
                <Row $indent={2}><Expander $open /><Gap $w={3} /><Check><Tick /></Check><Gap $w={6} /><Icon n="group" s={16} /><RowLabel>Bakgrunnskart</RowLabel></Row>
                {rasters.map(([t, on, open, ls]) => (
                  <Row key={t} $indent={22}><Expander $open={open} /><Gap $w={3} /><Check $faint={!on}>{on && <Tick />}</Check><Gap $w={8} />
                    <Icon n="raster" s={14} /><RowLabel $kind={on ? 'bold' : 'muted'} $ls={ls}>{t}</RowLabel></Row>
                ))}
              </Tree>
              <HBar><BarEnd $dir="left"><Tri d="left" /></BarEnd><Thumb /><Fill /><BarEnd $dir="right"><Tri d="right" /></BarEnd></HBar>
            </VFrame>
          </Side>
          <SideSplit />
          <Canvas><Track /></Canvas>
        </Main>
        <Status>
          <Field $w={336} $h={27} $fs={14}>
            <Gap $w={8} />
            <svg width="13" height="13" viewBox="0 0 13 13" fill="none" stroke="#888" strokeWidth="1.200"><circle cx="5" cy="5" r="4" /><path d="M8 8l4.500 4.500" /></svg>
            <FieldText $pl={7} $ls={0.03}>Skriv her for å søke (Ctrl + K)</FieldText>
          </Field>
          <Clip $w={46} $ml={36} $shift={9}>Koordinater</Clip>
          <Field $w={146} $h={23} $ml={3}><FieldText $pl={10} $ls={-0.25}>600012,35  6615537,41</FieldText></Field>
          <Item $ml={4}>
            <svg width="16" height="16" viewBox="0 0 16 16"><g fill="#fff" stroke="#222" strokeWidth="1.200"><ellipse cx="5" cy="5" rx="3" ry="4" transform="rotate(-40 5 5)" /><ellipse cx="10" cy="10.500" rx="4" ry="4" /><path d="M2 8l6 6M4 3l7 6M7 1l5 6M11 4l4-3" /><circle cx="10" cy="11" r="1.500" fill="#222" /></g></svg>
          </Item>
          <Clip $w={39} $ml={12} $shift={8.5}>Målestokk</Clip>
          <Field $w={101} $h={27} $ml={3}><FieldText $pl={3}>1:43</FieldText><ComboEnd><Tri /></ComboEnd></Field>
          <Item $ml={12}>
            <svg width="12" height="15" viewBox="0 0 12 15"><path d="M2.500 8V4a3.500 3.500 0 017 0v4" fill="none" stroke="#777" strokeWidth="1.500" /><rect y="7" width="12" height="8" rx="1" fill="#555" /></svg>
          </Item>
          <Clip $w={9} $ml={9} $shift={10}>Lupe</Clip>
          <Field $w={95} $h={26} $ml={2}><FieldText $pl={4}>100%</FieldText><SpinEnd><Tri d="up" /><Tri /></SpinEnd></Field>
          <Clip $w={30} $ml={9} $shift={8}>Rotasjon</Clip>
          <Field $w={95} $h={26} $ml={8}><FieldText $pl={4}>0,0°</FieldText><SpinEnd><Tri d="up" /><Tri /></SpinEnd></Field>
          <Item $ml={6}><Check><Tick /></Check></Item>
          <Item $ml={5} $w={51}>Tegn opp</Item>
          <Item $ml={14}>
            <svg width="15" height="14" viewBox="0 0 15 14" fill="#ccc" stroke="#777"><circle cx="7.500" cy="7" r="6" /><ellipse cx="7.500" cy="7" rx="3" ry="6" fill="none" /><path d="M7.500 1v12M0 7h15M2.500 4h10M2.500 10h10" /></svg>
          </Item>
          <Item $ml={3} $w={66}>EPSG:25832</Item>
          <Item $ml={22}>
            <svg width="17" height="15" viewBox="0 0 17 15"><path d="M6 0h5a5.500 5.500 0 012 11l1 4-4-3.500H6A5.700 5.700 0 016 0z" fill="#555" /><g fill="#fff"><circle cx="4.500" cy="6" r="1.200" /><circle cx="8.500" cy="6" r="1.200" /><circle cx="12.500" cy="6" r="1.200" /></g></svg>
          </Item>
          <SizeGrip />
        </Status>
        <Annotation width="1272" height="702" viewBox="0 0 1272 702">
          <path d="M956.500 28.800Q975 25.500 991.500 24.700 1000 25.500 1007 28.500L1018 36Q1033 46 1041 58 1044 66 1046 78L1051.500 96Q1050 106 1040 119 1032 124 1023 127.500 1012 134 1001 136.500 990 138 978 137 966 136.500 956.500 134 946 129 936.500 123 925 112 914 97.500 914 91 917 85L932.500 56.500Q940 46 948 39.500L955.500 35.500" fill="none" stroke="#cc0202" strokeWidth="4" strokeLinecap="round" strokeLinejoin="round" />
        </Annotation>
      </Window>
    </>
  );
}
